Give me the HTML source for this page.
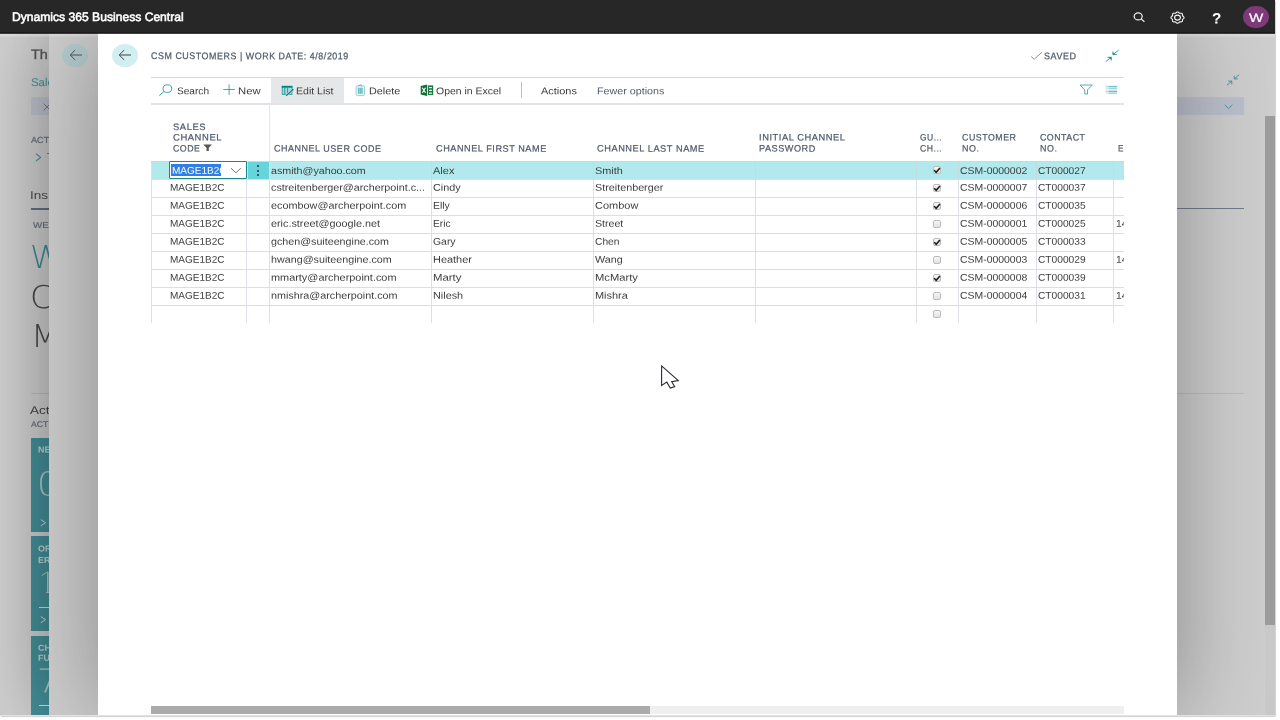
<!DOCTYPE html>
<html lang="en"><head><meta charset="utf-8"><title>CSM Customers - Dynamics 365 Business Central</title>
<style>
html,body{margin:0;padding:0;width:1280px;height:720px;background:#fff;overflow:hidden;font-family:"Liberation Sans",sans-serif}
*{box-sizing:border-box}
.abs,.t,svg{position:absolute}
.t{white-space:pre;line-height:1;transform-origin:0 0;text-rendering:geometricPrecision}
.pc{left:0;top:0;width:1280px;height:720px}
#frame{left:0;top:0;width:1275px;height:715.5px;box-shadow:.5px 1.100px 1.500px rgba(0,0,0,.52);background:#e2e2e2}
#shot{left:0;top:0;width:1275px;height:714.5px;overflow:hidden;background:#d0d0d0;will-change:transform}
#top{left:0;top:0;width:1275px;height:34px;background:linear-gradient(#272727 0,#272727 32px,#1e1e1e 32px,#1a1a1a 33px,rgba(24,24,24,.82) 33px,rgba(24,24,24,.82) 34px)}
#base{overflow:hidden}
#mid{left:49px;top:33px;width:1400px;height:682px;background:#cecece;box-shadow:0 0 74px rgba(0,0,0,.34)}
#midc{left:-49px;top:-33px}
#panel{left:98px;top:33px;width:1079px;height:682px;background:#fff;box-shadow:0 0 88px rgba(0,0,0,.34)}
#clip{left:0;top:0;width:1026px;height:682px;overflow:hidden}
#pin{left:-98px;top:-33px}
.hl{background:#d9dbe3;height:1px}
.vl{background:#dddfe6;width:1px}
</style></head>
<body>
<div id="frame" class="abs"></div>
<div id="shot" class="abs">
<div id="base" class="abs pc">
<div class="abs" style="left:31px;top:97px;width:30px;height:18.2px;background:#c0c4d0"></div>
<svg style="left:42.5px;top:102.5px" width="8" height="8" viewBox="0 0 8 8"><path d="M.5 .5L7.500 7.500M7.500 .5L.5 7.500" stroke="#707070" stroke-width=".8" fill="none"/></svg>
<svg style="left:34.5px;top:152.5px" width="7" height="9" viewBox="0 0 7 9"><path d="M1 .8L5.600 4.400L1 8" stroke="#43979b" stroke-width="1.1" fill="none"/></svg>
<div class="abs" style="left:47px;top:153.300px;width:3px;height:1.1px;background:#43979b"></div>
<div class="abs" style="left:31px;top:207.5px;width:30px;height:2px;background:#687080"></div>
<div class="abs" style="left:31px;top:392.600px;width:30px;height:1px;background:#bdbdbd"></div>
<div class="abs" style="left:31px;top:437.5px;width:40px;height:94.25px;background:#45919a"></div>
<div class="abs" style="left:31px;top:536.25px;width:40px;height:94.25px;background:#45919a"></div>
<div class="abs" style="left:31px;top:635.5px;width:40px;height:94.5px;background:#45919a"></div>
<div class="abs" style="left:38.8px;top:607.0px;width:40px;height:1px;background:#cfe0e2"></div>
<div class="abs" style="left:38.8px;top:704.8px;width:40px;height:1px;background:#cfe0e2"></div>
<svg style="left:39.5px;top:518.5px" width="7" height="8" viewBox="0 0 7 8"><path d="M.8 .6L5.600 3.700L.8 6.800" stroke="#d6e6e8" stroke-width=".9" fill="none"/></svg>
<svg style="left:39.5px;top:616.3px" width="7" height="8" viewBox="0 0 7 8"><path d="M.8 .6L5.600 3.700L.8 6.800" stroke="#d6e6e8" stroke-width=".9" fill="none"/></svg>
<svg style="left:39.5px;top:714.5px" width="7" height="8" viewBox="0 0 7 8"><path d="M.8 .6L5.600 3.700L.8 6.800" stroke="#d6e6e8" stroke-width=".9" fill="none"/></svg>
<span class="t" style="left:30.99px;top:48px;font-size:13.4px;font-weight:400;color:#5a5a5a;transform:scaleX(1.0800) rotate(.03deg);-webkit-text-stroke:.35px #5a5a5a;">Th</span>
<span class="t" style="left:30.80px;top:78px;font-size:11.2px;font-weight:400;color:#4a999d;transform:scaleX(1.0200) rotate(.03deg);-webkit-text-stroke:.12px #4a999d;">Sale</span>
<span class="t" style="left:30.61px;top:136px;font-size:8.8px;font-weight:400;color:#6b727e;transform:scaleX(1.0400) rotate(.03deg);-webkit-text-stroke:.2px #6b727e;">ACT</span>
<span class="t" style="left:30.30px;top:191px;font-size:11.4px;font-weight:400;color:#4c4c4c;transform:scaleX(1.1937) rotate(.03deg);">Ins</span>
<span class="t" style="left:33.07px;top:221px;font-size:8.4px;font-weight:400;color:#6b727e;transform:scaleX(1.1559) rotate(.03deg);-webkit-text-stroke:.2px #6b727e;">WE</span>
<span class="t" style="left:29.71px;top:243px;font-size:31.5px;font-weight:200;color:#3f8c90;transform:scaleX(1.0400) rotate(.03deg);font-family:'DejaVu Sans',sans-serif;">W</span>
<span class="t" style="left:30.21px;top:283px;font-size:31.5px;font-weight:200;color:#4a4a4a;transform:scaleX(1.0400) rotate(.03deg);font-family:'DejaVu Sans',sans-serif;">C</span>
<span class="t" style="left:31.21px;top:322px;font-size:31.5px;font-weight:200;color:#4a4a4a;transform:scaleX(1.0400) rotate(.03deg);font-family:'DejaVu Sans',sans-serif;">M</span>
<span class="t" style="left:30.31px;top:406px;font-size:11.4px;font-weight:400;color:#454545;transform:scaleX(1.1762) rotate(.03deg);">Act</span>
<span class="t" style="left:30.64px;top:420px;font-size:8.4px;font-weight:400;color:#6b727e;transform:scaleX(1.0400) rotate(.03deg);-webkit-text-stroke:.2px #6b727e;">ACT</span>
<span class="t" style="left:38.12px;top:445px;font-size:8.6px;font-weight:700;color:#c6d8da;transform:translateY(0.50px) scaleX(1.0400) rotate(.03deg);">NE</span>
<span class="t" style="left:37.10px;top:467px;font-size:33px;font-weight:200;color:#b4cbce;transform:translateY(0.50px) scaleX(1.0400) rotate(.03deg);font-family:'DejaVu Sans',sans-serif;">0</span>
<span class="t" style="left:38.12px;top:544px;font-size:8.6px;font-weight:700;color:#c6d8da;transform:translateY(0.50px) scaleX(1.0400) rotate(.03deg);">OR</span>
<span class="t" style="left:38.12px;top:556px;font-size:8.6px;font-weight:700;color:#c6d8da;transform:scaleX(1.0400) rotate(.03deg);">ER</span>
<span class="t" style="left:37.90px;top:565px;font-size:33px;font-weight:400;color:#b4cbce;transform:translateY(0.75px) scaleX(1.0000) rotate(.03deg);-webkit-text-stroke:1.300px #45919a;">1</span>
<span class="t" style="left:38.12px;top:643px;font-size:8.6px;font-weight:700;color:#c6d8da;transform:translateY(0.75px) scaleX(1.0400) rotate(.03deg);">CH</span>
<span class="t" style="left:38.12px;top:653px;font-size:8.6px;font-weight:700;color:#c6d8da;transform:translateY(0.75px) scaleX(1.0400) rotate(.03deg);">FU</span>
<span class="t" style="left:37.10px;top:664px;font-size:33px;font-weight:200;color:#b4cbce;transform:translateY(0.50px) scaleX(1.0400) rotate(.03deg);font-family:'DejaVu Sans',sans-serif;">7</span>
<div class="abs" style="left:38px;top:589.5px;width:8.300px;height:6px;background:#45919a"></div>
</div>
<div id="mid" class="abs"><div id="midc" class="abs pc">
<div class="abs" style="left:62.4px;top:43.6px;width:26px;height:23px;border-radius:50%;background:#b6cdcf"></div>
<svg style="left:68.5px;top:49px" width="14" height="12" viewBox="0 0 14 12"><path d="M13 6H1.400M6.200 1.100L1.200 6L6.200 10.900" fill="none" stroke="#4c4c4c" stroke-width=".95"/></svg>

</div></div>
<div id="right" class="abs pc">
<div class="abs" style="left:0;top:34px;width:1275px;height:2.500px;background:linear-gradient(rgba(255,255,255,.32),rgba(255,255,255,.12))"></div>
<div class="abs" style="left:1170px;top:97px;width:74.3px;height:18.2px;background:#bcc0cc"></div>
<div class="abs" style="left:1170px;top:207.5px;width:74.3px;height:1.600px;background:#727b8b"></div>
<div class="abs" style="left:1170px;top:392.600px;width:74.3px;height:1px;background:#bdbdbd"></div>
<svg style="left:1225.5px;top:74px" width="14" height="12" viewBox="0 0 14 12"><g fill="none" stroke="#4f969b" stroke-width="1"><path d="M13.2 .6L8.200 4.900M8.200 1.600V4.900H11.800"/><path d="M.8 11.400L5.800 7.100M5.800 10.400V7.100H2.200"/></g></svg>
<svg style="left:1224px;top:103.5px" width="9" height="6" viewBox="0 0 9 6"><path d="M.6 .8L4.500 4.600L8.400 .8" stroke="#4f969b" stroke-width="1" fill="none"/></svg>
</div>
<div id="panel" class="abs"><div id="clip" class="abs"><div id="pin" class="abs pc">
<div class="abs" style="left:111.5px;top:43.5px;width:26px;height:23px;border-radius:50%;background:#d3eef0"></div>
<svg style="left:118px;top:49px" width="14" height="12" viewBox="0 0 14 12"><path d="M13 6H1.400M6.200 1.100L1.200 6L6.200 10.900" fill="none" stroke="#3a3a3a" stroke-width=".95"/></svg>
<svg style="left:1030px;top:51px" width="14" height="10" viewBox="0 0 14 10"><path d="M1.100 5.500L4.200 8.200L12 1.200" fill="none" stroke="#6c7786" stroke-width=".8"/></svg>
<svg style="left:1105px;top:49px" width="15" height="14" viewBox="0 0 15 14"><g fill="none" stroke="#1a9196" stroke-width=".85"><path d="M13.600 1.200L7.900 5.600M7.900 2.500V5.600H11.700"/><path d="M.8 12.600L6.300 8.300M6.300 11.400V8.300H2.500"/></g><path d="M7.900 5.600V3.200L10.900 5.600Z" fill="#1a9196"/><path d="M6.300 8.300V10.700L3.300 8.300Z" fill="#1a9196"/></svg>
<div class="abs hl" style="left:151px;top:77px;width:973px;background:#d6d8e1"></div>
<div class="abs" style="left:271px;top:78px;width:72.5px;height:25.500px;background:#e6e7e9"></div>
<div class="abs hl" style="left:151px;top:103px;width:973px;height:1.500px;background:#e2e3e9"></div>
<div class="abs" style="left:520.5px;top:82px;width:1px;height:16px;background:#b9bdc9"></div>
<svg style="left:158px;top:83px" width="16" height="14" viewBox="0 0 16 14"><g fill="none" stroke="#1a9196" stroke-width=".85"><ellipse cx="9.400" cy="5.600" rx="4.300" ry="3.800"/><path d="M6 8.500L1.300 12.500"/></g></svg>
<svg style="left:223px;top:84px" width="13" height="12" viewBox="0 0 13 12"><path d="M6.100 .3V10.900M.3 5.500H11.900" fill="none" stroke="#1a9196" stroke-width=".8"/></svg>
<svg style="left:281px;top:85px" width="13" height="12" viewBox="0 0 13 12"><rect x="1.200" y="1.300" width="9.800" height="8" fill="#a9d9dc" stroke="#1a9196" stroke-width=".8"/><rect x=".8" y=".9" width="10.600" height="1.800" fill="#008489"/><path d="M3.800 2.600V9.300M6.600 2.600V9.300" stroke="#1a9196" stroke-width=".9"/><path d="M5.400 10.500L11.700 4.700" stroke="#e6e7e9" stroke-width="2.300"/><path d="M5.200 10.700L11.400 5" stroke="#008489" stroke-width="1.300"/><circle cx="11.700" cy="4.700" r=".9" fill="#008489"/></svg>
<svg style="left:355px;top:84px" width="11" height="13" viewBox="0 0 11 13"><path d="M3.300 1.700Q5.300 .2 7.300 1.700" fill="none" stroke="#2b9ba0" stroke-width="1"/><rect x="1.100" y="1.900" width="8.400" height="9.700" rx="1.300" fill="#e9f6f7" stroke="#8fcdd1" stroke-width=".9"/><rect x="2.800" y="3.800" width="5" height="6" fill="#a4d6da"/><path d="M3.600 3.800V9.800M5.300 3.800V9.800M7 3.800V9.800" stroke="#58b3b8" stroke-width=".8"/></svg>
<svg style="left:420px;top:84px" width="14" height="13" viewBox="0 0 14 13"><path d="M.7 1.900L7.100 .6V11.900L.7 10.500Z" fill="#12703b"/><path d="M2.300 3.700L5.500 8.800M5.500 3.700L2.300 8.800" stroke="#fff" stroke-width="1.200"/><rect x="7.900" y="1.400" width="5.300" height="9.700" fill="#1a7743"/><rect x="9" y="2.900" width="3" height="1.300" rx=".6" fill="#fff"/><rect x="9" y="5.700" width="3" height="1.300" rx=".6" fill="#fff"/><rect x="9" y="8.500" width="3" height="1.300" rx=".6" fill="#fff"/></svg>
<svg style="left:1079px;top:83px" width="15" height="13" viewBox="0 0 15 13"><path d="M1 2H13.300L8.500 6.900V11H5.800V6.900Z" fill="none" stroke="#2b9ba0" stroke-width=".8" stroke-linejoin="round"/></svg>
<svg style="left:1105px;top:85px" width="13" height="10" viewBox="0 0 13 10"><rect x=".8" y="1" width="11.200" height="8" fill="#d3ecee"/><path d="M.8 1.400H12M.8 6.500H12" stroke="#5cb4b9" stroke-width=".9"/><path d="M.8 3.400H12M.8 8.400H12" stroke="#98cfd3" stroke-width=".9"/><rect x=".8" y=".8" width="3" height="8.400" fill="#fff" opacity=".45"/></svg>
<svg style="left:203px;top:144px" width="10" height="8" viewBox="0 0 10 8"><path d="M.3 .4H9L5.800 3.800V7H3.500V3.800Z" fill="#555"/></svg>
<div class="abs vl" style="left:269px;top:104px;height:58px;background:#e6e7eb"></div>
<div class="abs" style="left:151px;top:161px;width:973px;height:18px;background:#b2e9ed"></div>
<div class="abs" style="left:247.5px;top:161.5px;width:21.5px;height:17.500px;background:#66d4db"></div>
<div class="abs hl" style="left:151px;top:161px;width:973px;background:rgba(205,210,222,.55)"></div>
<div class="abs hl" style="left:151px;top:179.0px;width:973px;background:#dcdee5"></div>
<div class="abs hl" style="left:151px;top:197.0px;width:973px;background:#dcdee5"></div>
<div class="abs hl" style="left:151px;top:215.0px;width:973px;background:#dcdee5"></div>
<div class="abs hl" style="left:151px;top:233.0px;width:973px;background:#dcdee5"></div>
<div class="abs hl" style="left:151px;top:251.0px;width:973px;background:#dcdee5"></div>
<div class="abs hl" style="left:151px;top:269.0px;width:973px;background:#dcdee5"></div>
<div class="abs hl" style="left:151px;top:287.0px;width:973px;background:#dcdee5"></div>
<div class="abs hl" style="left:151px;top:305.0px;width:973px;background:#dcdee5"></div>
<div class="abs vl" style="left:151px;top:161.5px;height:161px"></div>
<div class="abs vl" style="left:246px;top:161.5px;height:161px"></div>
<div class="abs vl" style="left:269px;top:161.5px;height:161px"></div>
<div class="abs vl" style="left:431px;top:161.5px;height:161px"></div>
<div class="abs vl" style="left:593px;top:161.5px;height:161px"></div>
<div class="abs vl" style="left:755px;top:161.5px;height:161px"></div>
<div class="abs vl" style="left:916px;top:161.5px;height:161px"></div>
<div class="abs vl" style="left:958px;top:161.5px;height:161px"></div>
<div class="abs vl" style="left:1036px;top:161.5px;height:161px"></div>
<div class="abs vl" style="left:1113px;top:161.5px;height:161px"></div>
<div class="abs vl" style="left:431px;top:161.5px;height:18px;background:#c6dbe0"></div>
<div class="abs vl" style="left:593px;top:161.5px;height:18px;background:#c6dbe0"></div>
<div class="abs vl" style="left:755px;top:161.5px;height:18px;background:#c6dbe0"></div>
<div class="abs vl" style="left:916px;top:161.5px;height:18px;background:#c6dbe0"></div>
<div class="abs vl" style="left:958px;top:161.5px;height:18px;background:#c6dbe0"></div>
<div class="abs vl" style="left:1036px;top:161.5px;height:18px;background:#c6dbe0"></div>
<div class="abs vl" style="left:1113px;top:161.5px;height:18px;background:#c6dbe0"></div>
<div class="abs" style="left:169px;top:161px;width:77.500px;height:18px;background:#fff;border:1px solid #1d868b;border-radius:1px"></div>
<div class="abs" id="sel" style="left:171.300px;top:164px;width:50px;height:12px;background:#2f7fe6;overflow:hidden"><div class="abs" style="left:-171.300px;top:-164px;width:400px;height:200px">
<span class="t" style="left:171.90px;top:166px;font-size:9.8px;font-weight:400;color:#ffffff;transform:translateY(0.80px) scaleX(1.0232) rotate(.03deg);">MAGE1B2C</span>
</div></div>
<svg style="left:230px;top:167px" width="12" height="7" viewBox="0 0 12 7"><path d="M1 1.200L5.900 5.800L10.800 1.200" fill="none" stroke="#777" stroke-width="1"/></svg>
<div class="abs" style="left:257.300px;top:165.3px;width:2px;height:2px;background:#2a2f45;border-radius:50%"></div>
<div class="abs" style="left:257.300px;top:169.5px;width:2px;height:2px;background:#2a2f45;border-radius:50%"></div>
<div class="abs" style="left:257.300px;top:173.7px;width:2px;height:2px;background:#2a2f45;border-radius:50%"></div>
<div class="abs" style="left:932.600px;top:166.3px;width:8.300px;height:7.700px;border:1px solid #bcbcbc;border-radius:2px;background:linear-gradient(#f6f6f6,#e2e2e2)"></div>
<svg style="left:933px;top:166.7px" width="8" height="7" viewBox="0 0 8 7"><path d="M1.200 3.300L3.200 5.300L6.900 1.100" fill="none" stroke="#1e1e1e" stroke-width="1.550"/></svg>
<div class="abs" style="left:932.600px;top:184.3px;width:8.300px;height:7.700px;border:1px solid #bcbcbc;border-radius:2px;background:linear-gradient(#f6f6f6,#e2e2e2)"></div>
<svg style="left:933px;top:184.7px" width="8" height="7" viewBox="0 0 8 7"><path d="M1.200 3.300L3.200 5.300L6.900 1.100" fill="none" stroke="#1e1e1e" stroke-width="1.550"/></svg>
<div class="abs" style="left:932.600px;top:202.3px;width:8.300px;height:7.700px;border:1px solid #bcbcbc;border-radius:2px;background:linear-gradient(#f6f6f6,#e2e2e2)"></div>
<svg style="left:933px;top:202.7px" width="8" height="7" viewBox="0 0 8 7"><path d="M1.200 3.300L3.200 5.300L6.900 1.100" fill="none" stroke="#1e1e1e" stroke-width="1.550"/></svg>
<div class="abs" style="left:932.600px;top:220.3px;width:8.300px;height:7.700px;border:1px solid #bcbcbc;border-radius:2px;background:linear-gradient(#f6f6f6,#e2e2e2)"></div>
<div class="abs" style="left:932.600px;top:238.3px;width:8.300px;height:7.700px;border:1px solid #bcbcbc;border-radius:2px;background:linear-gradient(#f6f6f6,#e2e2e2)"></div>
<svg style="left:933px;top:238.7px" width="8" height="7" viewBox="0 0 8 7"><path d="M1.200 3.300L3.200 5.300L6.900 1.100" fill="none" stroke="#1e1e1e" stroke-width="1.550"/></svg>
<div class="abs" style="left:932.600px;top:256.3px;width:8.300px;height:7.700px;border:1px solid #bcbcbc;border-radius:2px;background:linear-gradient(#f6f6f6,#e2e2e2)"></div>
<div class="abs" style="left:932.600px;top:274.3px;width:8.300px;height:7.700px;border:1px solid #bcbcbc;border-radius:2px;background:linear-gradient(#f6f6f6,#e2e2e2)"></div>
<svg style="left:933px;top:274.7px" width="8" height="7" viewBox="0 0 8 7"><path d="M1.200 3.300L3.200 5.300L6.900 1.100" fill="none" stroke="#1e1e1e" stroke-width="1.550"/></svg>
<div class="abs" style="left:932.600px;top:292.3px;width:8.300px;height:7.700px;border:1px solid #bcbcbc;border-radius:2px;background:linear-gradient(#f6f6f6,#e2e2e2)"></div>
<div class="abs" style="left:932.600px;top:310.3px;width:8.300px;height:7.700px;border:1px solid #bcbcbc;border-radius:2px;background:linear-gradient(#f6f6f6,#e2e2e2)"></div>
<div class="abs" style="left:151px;top:705.5px;width:973px;height:8.500px;background:#efefef"></div>
<div class="abs" style="left:151px;top:705.5px;width:499px;height:8.500px;background:#ababab"></div>
<svg style="left:655px;top:360px" width="30" height="34" viewBox="655 360 30 34"><path d="M661.600 365.900L678.300 380.600L671.700 381.600L674.700 386.600L670.300 388.100L666.800 382.100L661.600 385.500Z" fill="#fff" stroke="#2c2c36" stroke-width="1.100" stroke-linejoin="miter"/></svg>
<span class="t" style="left:150.58px;top:52px;font-size:9.6px;font-weight:400;color:#505c6d;transform:translateY(0.10px) scaleX(0.9245) rotate(.03deg);letter-spacing:.6px;-webkit-text-stroke:.25px #505c6d;">CSM CUSTOMERS | WORK DATE: 4/8/2019</span>
<span class="t" style="left:1044.07px;top:52px;font-size:9.6px;font-weight:400;color:#505c6d;transform:translateY(0.30px) scaleX(0.9351) rotate(.03deg);letter-spacing:.6px;-webkit-text-stroke:.25px #505c6d;">SAVED</span>
<span class="t" style="left:177.39px;top:87px;font-size:9.8px;font-weight:400;color:#3c3c3c;transform:translateY(0.20px) scaleX(1.0327) rotate(.03deg);">Search</span>
<span class="t" style="left:238.21px;top:87px;font-size:9.8px;font-weight:400;color:#3c3c3c;transform:translateY(0.20px) scaleX(1.1512) rotate(.03deg);">New</span>
<span class="t" style="left:296.16px;top:87px;font-size:9.8px;font-weight:400;color:#3c3c3c;transform:translateY(0.20px) scaleX(1.0749) rotate(.03deg);">Edit List</span>
<span class="t" style="left:369.24px;top:87px;font-size:9.8px;font-weight:400;color:#3c3c3c;transform:translateY(0.20px) scaleX(1.1034) rotate(.03deg);">Delete</span>
<span class="t" style="left:435.87px;top:87px;font-size:9.8px;font-weight:400;color:#3c3c3c;transform:translateY(0.20px) scaleX(1.0674) rotate(.03deg);">Open in Excel</span>
<span class="t" style="left:541.13px;top:87px;font-size:9.8px;font-weight:400;color:#3c3c3c;transform:translateY(0.20px) scaleX(1.1162) rotate(.03deg);">Actions</span>
<span class="t" style="left:597.35px;top:87px;font-size:9.8px;font-weight:400;color:#505c6d;transform:translateY(0.20px) scaleX(1.0950) rotate(.03deg);">Fewer options</span>
<span class="t" style="left:172.84px;top:122px;font-size:9.3px;font-weight:400;color:#505c6d;transform:translateY(0.90px) scaleX(1.0099) rotate(.03deg);letter-spacing:.55px;-webkit-text-stroke:.22px #505c6d;">SALES</span>
<span class="t" style="left:172.84px;top:133px;font-size:9.3px;font-weight:400;color:#505c6d;transform:translateY(0.50px) scaleX(1.0163) rotate(.03deg);letter-spacing:.55px;-webkit-text-stroke:.22px #505c6d;">CHANNEL</span>
<span class="t" style="left:172.88px;top:144px;font-size:9.3px;font-weight:400;color:#505c6d;transform:translateY(0.60px) scaleX(0.9454) rotate(.03deg);letter-spacing:.55px;-webkit-text-stroke:.22px #505c6d;">CODE</span>
<span class="t" style="left:274.37px;top:144px;font-size:9.3px;font-weight:400;color:#505c6d;transform:translateY(0.60px) scaleX(0.9659) rotate(.03deg);letter-spacing:.55px;-webkit-text-stroke:.22px #505c6d;">CHANNEL USER CODE</span>
<span class="t" style="left:435.61px;top:144px;font-size:9.3px;font-weight:400;color:#505c6d;transform:translateY(0.60px) scaleX(0.9829) rotate(.03deg);letter-spacing:.55px;-webkit-text-stroke:.22px #505c6d;">CHANNEL FIRST NAME</span>
<span class="t" style="left:597.35px;top:144px;font-size:9.3px;font-weight:400;color:#505c6d;transform:translateY(0.60px) scaleX(0.9930) rotate(.03deg);letter-spacing:.55px;-webkit-text-stroke:.22px #505c6d;">CHANNEL LAST NAME</span>
<span class="t" style="left:758.75px;top:133px;font-size:9.3px;font-weight:400;color:#505c6d;transform:translateY(0.50px) scaleX(1.0019) rotate(.03deg);letter-spacing:.55px;-webkit-text-stroke:.22px #505c6d;">INITIAL CHANNEL</span>
<span class="t" style="left:758.76px;top:144px;font-size:9.3px;font-weight:400;color:#505c6d;transform:translateY(0.60px) scaleX(0.9814) rotate(.03deg);letter-spacing:.55px;-webkit-text-stroke:.22px #505c6d;">PASSWORD</span>
<span class="t" style="left:920.41px;top:133px;font-size:9.3px;font-weight:400;color:#505c6d;transform:translateY(0.50px) scaleX(0.9069) rotate(.03deg);letter-spacing:.55px;-webkit-text-stroke:.22px #505c6d;">GU...</span>
<span class="t" style="left:920.40px;top:144px;font-size:9.3px;font-weight:400;color:#505c6d;transform:translateY(0.60px) scaleX(0.9275) rotate(.03deg);letter-spacing:.55px;-webkit-text-stroke:.22px #505c6d;">CH...</span>
<span class="t" style="left:962.18px;top:133px;font-size:9.3px;font-weight:400;color:#505c6d;transform:translateY(0.50px) scaleX(0.9476) rotate(.03deg);letter-spacing:.55px;-webkit-text-stroke:.22px #505c6d;">CUSTOMER</span>
<span class="t" style="left:962.18px;top:144px;font-size:9.3px;font-weight:400;color:#505c6d;transform:translateY(0.60px) scaleX(0.9591) rotate(.03deg);letter-spacing:.55px;-webkit-text-stroke:.22px #505c6d;">NO.</span>
<span class="t" style="left:1039.88px;top:133px;font-size:9.3px;font-weight:400;color:#505c6d;transform:translateY(0.50px) scaleX(0.9466) rotate(.03deg);letter-spacing:.55px;-webkit-text-stroke:.22px #505c6d;">CONTACT</span>
<span class="t" style="left:1039.88px;top:144px;font-size:9.3px;font-weight:400;color:#505c6d;transform:translateY(0.60px) scaleX(0.9591) rotate(.03deg);letter-spacing:.55px;-webkit-text-stroke:.22px #505c6d;">NO.</span>
<span class="t" style="left:1118.03px;top:144px;font-size:9.3px;font-weight:400;color:#505c6d;transform:translateY(0.60px) scaleX(0.8778) rotate(.03deg);letter-spacing:.55px;-webkit-text-stroke:.22px #505c6d;">E</span>
<span class="t" style="left:271.15px;top:166px;font-size:9.8px;font-weight:400;color:#3c3c3c;transform:translateY(0.90px) scaleX(1.0923) rotate(.03deg);">asmith@yahoo.com</span>
<span class="t" style="left:433.13px;top:166px;font-size:9.8px;font-weight:400;color:#3c3c3c;transform:translateY(0.90px) scaleX(1.1217) rotate(.03deg);">Alex</span>
<span class="t" style="left:594.94px;top:166px;font-size:9.8px;font-weight:400;color:#3c3c3c;transform:translateY(0.90px) scaleX(1.1106) rotate(.03deg);">Smith</span>
<span class="t" style="left:959.97px;top:166px;font-size:9.8px;font-weight:400;color:#3c3c3c;transform:translateY(0.90px) scaleX(1.0644) rotate(.03deg);">CSM-0000002</span>
<span class="t" style="left:1037.59px;top:166px;font-size:9.8px;font-weight:400;color:#3c3c3c;transform:translateY(0.90px) scaleX(1.0406) rotate(.03deg);">CT000027</span>
<span class="t" style="left:170.20px;top:183px;font-size:9.8px;font-weight:400;color:#3c3c3c;transform:translateY(0.80px) scaleX(1.0232) rotate(.03deg);">MAGE1B2C</span>
<span class="t" style="left:271.15px;top:183px;font-size:9.8px;font-weight:400;color:#3c3c3c;transform:translateY(0.80px) scaleX(1.0993) rotate(.03deg);">cstreitenberger@archerpoint.c...</span>
<span class="t" style="left:433.14px;top:183px;font-size:9.8px;font-weight:400;color:#3c3c3c;transform:translateY(0.80px) scaleX(1.1015) rotate(.03deg);">Cindy</span>
<span class="t" style="left:594.95px;top:183px;font-size:9.8px;font-weight:400;color:#3c3c3c;transform:translateY(0.80px) scaleX(1.1000) rotate(.03deg);">Streitenberger</span>
<span class="t" style="left:959.97px;top:183px;font-size:9.8px;font-weight:400;color:#3c3c3c;transform:translateY(0.80px) scaleX(1.0644) rotate(.03deg);">CSM-0000007</span>
<span class="t" style="left:1037.59px;top:183px;font-size:9.8px;font-weight:400;color:#3c3c3c;transform:translateY(0.80px) scaleX(1.0406) rotate(.03deg);">CT000037</span>
<span class="t" style="left:170.20px;top:201px;font-size:9.8px;font-weight:400;color:#3c3c3c;transform:translateY(0.80px) scaleX(1.0232) rotate(.03deg);">MAGE1B2C</span>
<span class="t" style="left:271.14px;top:201px;font-size:9.8px;font-weight:400;color:#3c3c3c;transform:translateY(0.80px) scaleX(1.1076) rotate(.03deg);">ecombow@archerpoint.com</span>
<span class="t" style="left:433.17px;top:201px;font-size:9.8px;font-weight:400;color:#3c3c3c;transform:translateY(0.80px) scaleX(1.0638) rotate(.03deg);">Elly</span>
<span class="t" style="left:594.93px;top:201px;font-size:9.8px;font-weight:400;color:#3c3c3c;transform:translateY(0.80px) scaleX(1.1205) rotate(.03deg);">Combow</span>
<span class="t" style="left:959.97px;top:201px;font-size:9.8px;font-weight:400;color:#3c3c3c;transform:translateY(0.80px) scaleX(1.0644) rotate(.03deg);">CSM-0000006</span>
<span class="t" style="left:1037.59px;top:201px;font-size:9.8px;font-weight:400;color:#3c3c3c;transform:translateY(0.80px) scaleX(1.0406) rotate(.03deg);">CT000035</span>
<span class="t" style="left:170.20px;top:219px;font-size:9.8px;font-weight:400;color:#3c3c3c;transform:translateY(0.80px) scaleX(1.0232) rotate(.03deg);">MAGE1B2C</span>
<span class="t" style="left:271.14px;top:219px;font-size:9.8px;font-weight:400;color:#3c3c3c;transform:translateY(0.80px) scaleX(1.1042) rotate(.03deg);">eric.street@google.net</span>
<span class="t" style="left:433.19px;top:219px;font-size:9.8px;font-weight:400;color:#3c3c3c;transform:translateY(0.80px) scaleX(1.0382) rotate(.03deg);">Eric</span>
<span class="t" style="left:594.96px;top:219px;font-size:9.8px;font-weight:400;color:#3c3c3c;transform:translateY(0.80px) scaleX(1.0818) rotate(.03deg);">Street</span>
<span class="t" style="left:959.97px;top:219px;font-size:9.8px;font-weight:400;color:#3c3c3c;transform:translateY(0.80px) scaleX(1.0644) rotate(.03deg);">CSM-0000001</span>
<span class="t" style="left:1037.59px;top:219px;font-size:9.8px;font-weight:400;color:#3c3c3c;transform:translateY(0.80px) scaleX(1.0406) rotate(.03deg);">CT000025</span>
<span class="t" style="left:1116.28px;top:219px;font-size:9.8px;font-weight:400;color:#3c3c3c;transform:translateY(0.80px) scaleX(1.0483) rotate(.03deg);">14</span>
<span class="t" style="left:170.20px;top:237px;font-size:9.8px;font-weight:400;color:#3c3c3c;transform:translateY(0.80px) scaleX(1.0232) rotate(.03deg);">MAGE1B2C</span>
<span class="t" style="left:271.15px;top:237px;font-size:9.8px;font-weight:400;color:#3c3c3c;transform:translateY(0.80px) scaleX(1.0927) rotate(.03deg);">gchen@suiteengine.com</span>
<span class="t" style="left:433.17px;top:237px;font-size:9.8px;font-weight:400;color:#3c3c3c;transform:translateY(0.80px) scaleX(1.0620) rotate(.03deg);">Gary</span>
<span class="t" style="left:594.98px;top:237px;font-size:9.8px;font-weight:400;color:#3c3c3c;transform:translateY(0.80px) scaleX(1.0451) rotate(.03deg);">Chen</span>
<span class="t" style="left:959.97px;top:237px;font-size:9.8px;font-weight:400;color:#3c3c3c;transform:translateY(0.80px) scaleX(1.0644) rotate(.03deg);">CSM-0000005</span>
<span class="t" style="left:1037.59px;top:237px;font-size:9.8px;font-weight:400;color:#3c3c3c;transform:translateY(0.80px) scaleX(1.0406) rotate(.03deg);">CT000033</span>
<span class="t" style="left:170.20px;top:255px;font-size:9.8px;font-weight:400;color:#3c3c3c;transform:translateY(0.80px) scaleX(1.0232) rotate(.03deg);">MAGE1B2C</span>
<span class="t" style="left:271.15px;top:255px;font-size:9.8px;font-weight:400;color:#3c3c3c;transform:translateY(0.80px) scaleX(1.0960) rotate(.03deg);">hwang@suiteengine.com</span>
<span class="t" style="left:433.13px;top:255px;font-size:9.8px;font-weight:400;color:#3c3c3c;transform:translateY(0.80px) scaleX(1.1152) rotate(.03deg);">Heather</span>
<span class="t" style="left:594.94px;top:255px;font-size:9.8px;font-weight:400;color:#3c3c3c;transform:translateY(0.80px) scaleX(1.1019) rotate(.03deg);">Wang</span>
<span class="t" style="left:959.97px;top:255px;font-size:9.8px;font-weight:400;color:#3c3c3c;transform:translateY(0.80px) scaleX(1.0644) rotate(.03deg);">CSM-0000003</span>
<span class="t" style="left:1037.59px;top:255px;font-size:9.8px;font-weight:400;color:#3c3c3c;transform:translateY(0.80px) scaleX(1.0406) rotate(.03deg);">CT000029</span>
<span class="t" style="left:1116.28px;top:255px;font-size:9.8px;font-weight:400;color:#3c3c3c;transform:translateY(0.80px) scaleX(1.0483) rotate(.03deg);">14</span>
<span class="t" style="left:170.20px;top:273px;font-size:9.8px;font-weight:400;color:#3c3c3c;transform:translateY(0.80px) scaleX(1.0232) rotate(.03deg);">MAGE1B2C</span>
<span class="t" style="left:271.14px;top:273px;font-size:9.8px;font-weight:400;color:#3c3c3c;transform:translateY(0.80px) scaleX(1.1123) rotate(.03deg);">mmarty@archerpoint.com</span>
<span class="t" style="left:433.10px;top:273px;font-size:9.8px;font-weight:400;color:#3c3c3c;transform:translateY(0.80px) scaleX(1.1607) rotate(.03deg);">Marty</span>
<span class="t" style="left:594.92px;top:273px;font-size:9.8px;font-weight:400;color:#3c3c3c;transform:translateY(0.80px) scaleX(1.1410) rotate(.03deg);">McMarty</span>
<span class="t" style="left:959.97px;top:273px;font-size:9.8px;font-weight:400;color:#3c3c3c;transform:translateY(0.80px) scaleX(1.0644) rotate(.03deg);">CSM-0000008</span>
<span class="t" style="left:1037.59px;top:273px;font-size:9.8px;font-weight:400;color:#3c3c3c;transform:translateY(0.80px) scaleX(1.0406) rotate(.03deg);">CT000039</span>
<span class="t" style="left:170.20px;top:291px;font-size:9.8px;font-weight:400;color:#3c3c3c;transform:translateY(0.80px) scaleX(1.0232) rotate(.03deg);">MAGE1B2C</span>
<span class="t" style="left:271.15px;top:291px;font-size:9.8px;font-weight:400;color:#3c3c3c;transform:translateY(0.80px) scaleX(1.0996) rotate(.03deg);">nmishra@archerpoint.com</span>
<span class="t" style="left:433.14px;top:291px;font-size:9.8px;font-weight:400;color:#3c3c3c;transform:translateY(0.80px) scaleX(1.1056) rotate(.03deg);">Nilesh</span>
<span class="t" style="left:594.93px;top:291px;font-size:9.8px;font-weight:400;color:#3c3c3c;transform:translateY(0.80px) scaleX(1.1163) rotate(.03deg);">Mishra</span>
<span class="t" style="left:959.97px;top:291px;font-size:9.8px;font-weight:400;color:#3c3c3c;transform:translateY(0.80px) scaleX(1.0644) rotate(.03deg);">CSM-0000004</span>
<span class="t" style="left:1037.59px;top:291px;font-size:9.8px;font-weight:400;color:#3c3c3c;transform:translateY(0.80px) scaleX(1.0406) rotate(.03deg);">CT000031</span>
<span class="t" style="left:1116.28px;top:291px;font-size:9.8px;font-weight:400;color:#3c3c3c;transform:translateY(0.80px) scaleX(1.0483) rotate(.03deg);">14</span>
</div></div></div>
<div id="vscroll" class="abs pc">
<div class="abs" style="left:1265px;top:33px;width:10px;height:682px;background:linear-gradient(rgba(200,200,200,0) 0,rgba(200,200,200,0) 20%,#c8c8c8 100%)"></div>
<div class="abs" style="left:1265px;top:115.800px;width:10px;height:509px;background:#9b9b9b"></div>
</div>
<div id="top" class="abs">
<svg style="left:1132px;top:10px" width="14" height="14" viewBox="0 0 14 14"><g fill="none" stroke="#f2f2f2" stroke-width="1.250"><ellipse cx="6.200" cy="6.400" rx="4" ry="3.500"/><path d="M9.100 8.900L12.400 11.800"/></g></svg>
<svg style="left:1170px;top:10px" width="15" height="15" viewBox="0 0 15 15"><g fill="none" stroke="#f4f4f4" stroke-width="1.150"><path d="M14.01 7.60L13.93 7.97L13.70 8.31L13.38 8.61L13.05 8.89L12.76 9.15L12.57 9.42L12.49 9.73L12.48 10.09L12.49 10.49L12.46 10.90L12.34 11.28L12.10 11.59L11.75 11.80L11.31 11.90L10.83 11.92L10.37 11.91L9.96 11.92L9.60 12.00L9.29 12.16L8.99 12.41L8.67 12.70L8.32 12.97L7.92 13.17L7.50 13.24L7.08 13.17L6.68 12.97L6.33 12.70L6.01 12.41L5.71 12.16L5.40 12.00L5.04 11.92L4.63 11.91L4.17 11.92L3.69 11.90L3.25 11.80L2.90 11.59L2.66 11.28L2.54 10.90L2.51 10.49L2.52 10.09L2.51 9.73L2.43 9.42L2.24 9.15L1.95 8.89L1.62 8.61L1.30 8.31L1.07 7.97L0.99 7.60L1.07 7.23L1.30 6.89L1.62 6.59L1.95 6.31L2.24 6.05L2.43 5.78L2.51 5.47L2.52 5.11L2.51 4.71L2.54 4.30L2.66 3.92L2.90 3.61L3.25 3.40L3.69 3.30L4.17 3.28L4.63 3.29L5.04 3.28L5.40 3.20L5.71 3.04L6.01 2.79L6.33 2.50L6.68 2.23L7.08 2.03L7.50 1.96L7.92 2.03L8.32 2.23L8.67 2.50L8.99 2.79L9.29 3.04L9.60 3.20L9.96 3.28L10.37 3.29L10.83 3.28L11.31 3.30L11.75 3.40L12.10 3.61L12.34 3.92L12.46 4.30L12.49 4.71L12.48 5.11L12.49 5.47L12.57 5.78L12.76 6.05L13.05 6.31L13.38 6.59L13.70 6.89L13.93 7.23Z"/><ellipse cx="7.500" cy="7.600" rx="2.900" ry="2.500"/></g></svg>
<div class="abs" style="left:1243.2px;top:5.600px;width:25.600px;height:22.600px;border-radius:50%;background:#7f397b"></div>
<span class="t" style="left:11.55px;top:11px;font-size:12.2px;font-weight:400;color:#ffffff;transform:scaleX(0.9940) rotate(.03deg);-webkit-text-stroke:.55px #fff;">Dynamics 365 Business Central</span>
<span class="t" style="left:1212.33px;top:11px;font-size:15px;font-weight:700;color:#ffffff;transform:translateY(0.40px) scaleX(1.0170) rotate(.03deg);">?</span>
<span class="t" style="left:1249.14px;top:12px;font-size:12.4px;font-weight:400;color:#ffffff;transform:scaleX(1.2232) rotate(.03deg);-webkit-text-stroke:.2px #fff;">W</span>
</div>
</div>
</body></html>
